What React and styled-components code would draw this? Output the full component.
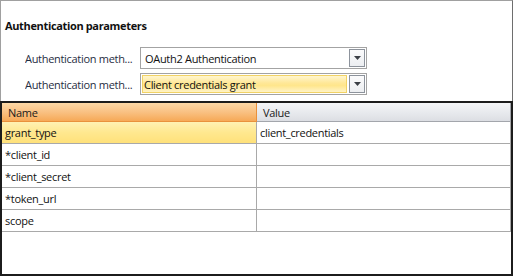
import React from "react";
import styled, { createGlobalStyle } from "styled-components";

const GlobalStyle = createGlobalStyle`
  html, body {
    margin: 0;
    padding: 0;
    background: #ffffff;
  }
  * {
    box-sizing: border-box;
  }
`;

const FONT = `"Segoe UI", "Open Sans", "Noto Sans", sans-serif`;

const Window = styled.div`
  display: flex;
  flex-direction: column;
  width: 513px;
  height: 276px;
  font-family: ${FONT};
  font-size: 11px;
  letter-spacing: -0.3px;
  color: #1e1e1e;
  background: #ffffff;
`;

const ParamPanel = styled.div`
  display: flex;
  flex-direction: column;
  height: 101px;
  border-top: 1px solid #a0a0a0;
  border-left: 1px solid #a0a0a0;
  border-right: 1px solid #6e6e6e;
  padding: 18px 0 0 4px;
`;

const Title = styled.div`
  font-weight: 700;
  line-height: 14px;
  letter-spacing: -0.35px;
  color: #111;
`;

const Form = styled.div`
  display: flex;
  flex-direction: column;
  gap: 4px;
  margin-top: 14px;
  padding-left: 20px;
`;

const FieldRow = styled.div`
  display: flex;
  align-items: center;
  height: 22px;
`;

const Label = styled.div`
  width: 115px;
  color: #1f2d42;
  white-space: nowrap;
  overflow: hidden;
`;

const Combo = styled.div`
  display: flex;
  align-items: center;
  gap: 2px;
  width: 227px;
  height: 22px;
  padding: 1px;
  border: 1px solid #a3a3a3;
  background: #ffffff;
`;

const ComboField = styled.div`
  flex: 1;
  height: 18px;
  display: flex;
  align-items: center;
  padding-left: ${(p) => (p.$active ? "1px" : "2px")};
  color: #111;
  border: 1px solid ${(p) => (p.$active ? "#f1d265" : "transparent")};
  background: ${(p) =>
    p.$active
      ? "linear-gradient(#fff6cf 0%, #ffe796 45%, #ffe68c 60%, #fff3c6 100%)"
      : "#ffffff"};
`;

const ComboButton = styled.div`
  width: 16px;
  height: 18px;
  display: flex;
  align-items: center;
  justify-content: center;
  border: 1px solid #8d939c;
  background: linear-gradient(#fbfbfc, #eceef1);
`;

const Grid = styled.div`
  flex: 1;
  display: flex;
  flex-direction: column;
  border: 2px solid #1c1c1c;
  background: #ffffff;
`;

const Row = styled.div`
  display: flex;
  height: ${(p) => (p.$header ? "19px" : "22px")};
`;

const HeaderCell = styled.div`
  display: flex;
  align-items: center;
  padding-left: 6px;
  width: ${(p) => p.$width};
  color: #1a1a1a;
  border-bottom: 1px solid ${(p) => (p.$sorted ? "#e9913c" : "#a3a6ac")};
  border-right: 1px solid ${(p) => (p.$sorted ? "#e9913c" : "#a3a6ac")};
  background: ${(p) =>
    p.$sorted
      ? "linear-gradient(#fcd8a6 0%, #f9c183 50%, #f6a957 100%)"
      : "linear-gradient(#f4f5f7 0%, #e6e8ec 60%, #dcdee3 100%)"};
`;

const Cell = styled.div`
  display: flex;
  align-items: center;
  padding-left: 3px;
  width: ${(p) => p.$width};
  color: #111;
  border-bottom: 1px solid #a9a9a9;
  border-right: 1px solid #a9a9a9;
  background: ${(p) =>
    p.$selected
      ? "linear-gradient(#fff1b3 0%, #ffe88f 50%, #ffe17a 100%)"
      : "#ffffff"};
`;

function DownArrow() {
  return (
    <svg width="7" height="4" viewBox="0 0 7 4">
      <path d="M0 0H7L3.5 4Z" fill="#3b3f46" />
    </svg>
  );
}

const rows = [
  { name: "grant_type", value: "client_credentials", selected: true },
  { name: "*client_id", value: "" },
  { name: "*client_secret", value: "" },
  { name: "*token_url", value: "" },
  { name: "scope", value: "" },
];

export default function App() {
  return (
    <>
      <GlobalStyle />
      <Window>
        <ParamPanel>
          <Title>Authentication parameters</Title>
          <Form>
            <FieldRow>
              <Label>Authentication meth...</Label>
              <Combo>
                <ComboField>OAuth2 Authentication</ComboField>
                <ComboButton>
                  <DownArrow />
                </ComboButton>
              </Combo>
            </FieldRow>
            <FieldRow>
              <Label>Authentication meth...</Label>
              <Combo>
                <ComboField $active>Client credentials grant</ComboField>
                <ComboButton>
                  <DownArrow />
                </ComboButton>
              </Combo>
            </FieldRow>
          </Form>
        </ParamPanel>
        <Grid>
          <Row $header>
            <HeaderCell $sorted $width="255px">
              Name
            </HeaderCell>
            <HeaderCell $width="254px">Value</HeaderCell>
          </Row>
          {rows.map((r) => (
            <Row key={r.name}>
              <Cell $width="255px" $selected={r.selected}>
                {r.name}
              </Cell>
              <Cell $width="254px">{r.value}</Cell>
            </Row>
          ))}
        </Grid>
      </Window>
    </>
  );
}
